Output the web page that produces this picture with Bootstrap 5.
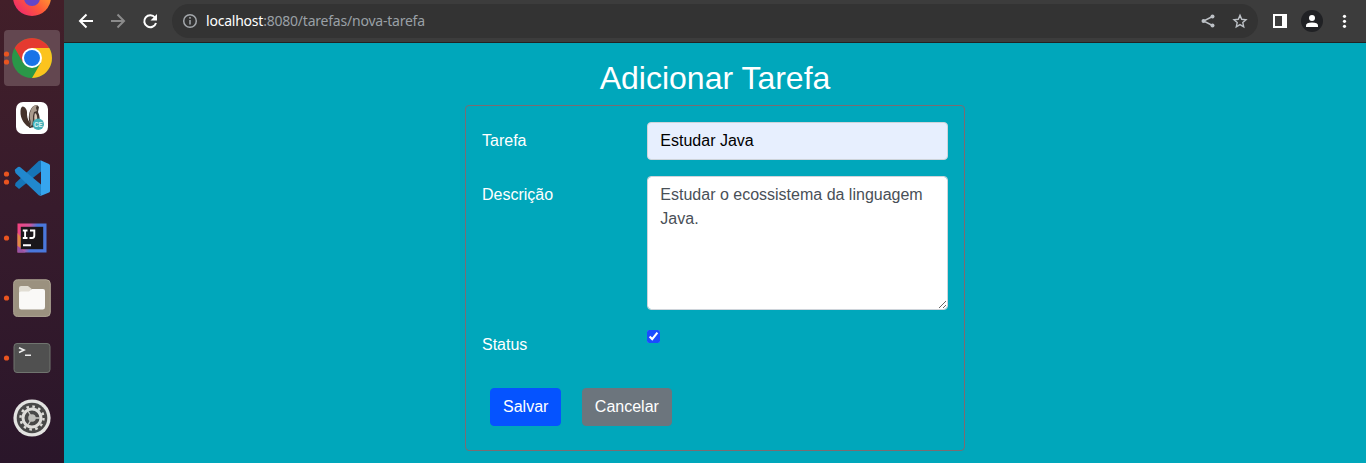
<!DOCTYPE html>
<html lang="pt-br">
<head>
<meta charset="utf-8">
<title>Nova tarefa</title>
<link rel="stylesheet" href="https://cdn.jsdelivr.net/npm/bootstrap@5.3.0/dist/css/bootstrap.min.css">
<style>
body{font-family:"Liberation Sans",Arial,sans-serif;height:463px;background:#00a7bb}
.dock{width:64px;background:linear-gradient(#421f29,#371b2c 45%,#2a162a)}
.dock svg{display:block;flex:none}
.toolbar{height:43px;background:#3c3c3c;border-bottom:1px solid #222}
.addr{height:34px;background:#333;border-radius:17px}
.url{font:14px/20px "Noto Sans",sans-serif;color:#9aa0a6;letter-spacing:-.22px;white-space:nowrap}
.url b{font-weight:400;color:#fff}
h1.title{font-size:32px;line-height:38.4px;font-weight:400;color:#fff;margin:16px 0 8px}
.panel{width:500px;height:346px;border:1px solid #7a6c72;border-radius:4px;color:#fff;padding:16px}
.panel .row{--bs-gutter-x:30px;margin-bottom:16px}
.panel .col-form-label{padding-top:7px;padding-bottom:7px}
.panel .form-control{border-radius:4px;border-color:#ced4da;color:#495057}
.panel input.form-control{background:#e7effe;color:#000;height:38px}
.panel textarea.form-control{height:134px}
.chk{width:13px;height:13px;margin-top:4px;display:block;accent-color:#1a4cff}
.btn-act{border-radius:4px;height:38px}
.btn-save{--bs-btn-color:#fff;--bs-btn-bg:#0553ff;--bs-btn-border-color:#0553ff}
.btn-cancel{margin-left:20.5px}
</style>
<script src="https://cdn.jsdelivr.net/npm/bootstrap@5.3.0/dist/js/bootstrap.bundle.min.js"></script>
</head>
<body class="d-flex overflow-hidden">
<nav class="dock d-flex flex-column flex-shrink-0 overflow-hidden">
  <svg width="64" height="28" viewBox="0 32 64 28"><defs><linearGradient id="ff" x1="0" x2="1" y1="1" y2="0"><stop offset="0" stop-color="#ea1a7c"/><stop offset=".45" stop-color="#ff5a38"/><stop offset="1" stop-color="#ffd02e"/></linearGradient></defs><circle cx="32" cy="29" r="19" fill="url(#ff)"/><circle cx="32" cy="30" r="8" fill="#6546c9"/></svg>
  <svg width="64" height="60" viewBox="0 0 64 60"><rect x="4" y="2" width="56" height="56" rx="4" fill="#634750"/><g fill="#e95420"><circle cx="6.500" cy="26" r="2.600"/><circle cx="6.500" cy="34" r="2.600"/></g>
    <circle cx="32" cy="30" r="20" fill="#2a9748"/><path d="M14.700 20A20 20 0 0 1 49.300 20H32L23.300 35Z" fill="#e53a30"/><path d="M49.300 20A20 20 0 0 1 32 50L40.700 35 32 20Z" fill="#fcc31e"/><circle cx="32" cy="30" r="10" fill="#fff"/><circle cx="32" cy="30" r="8" fill="#1a73e8"/></svg>
  <svg width="64" height="60" viewBox="0 0 64 60"><rect x="16" y="14" width="32" height="32" rx="7" fill="#fff"/><path d="M31 40C25 38 20 31 20.500 23c.2-3 1-4.500 2.500-4.500 3 1 4.500 4 4 8 0 4 2 7 4 10Z" fill="#45332c"/><path d="M29 27c1-6 4-10 8-10l2 2-1 5c2 4 2 8 1 11l-4 4-6 1c2-5-1-7 0-13Z" fill="#433630"/><path d="M32 20c1-2 3-3 5-3l-1 3 1 3-3 1-1 4c0 3 0 6-1 9l-2 2c1-3 1-5 0-8-1-4 0-8 2-11Z" fill="#a99b8d"/><path d="M35 25c2 1 2.500 4 2 7l-2 2c-1-3-1-6 0-9Z" fill="#d6c6b5"/><circle cx="38.300" cy="36.300" r="5.700" fill="#45b0b8"/><text x="38.300" y="39" font-family="Roboto,sans-serif" font-size="7" font-weight="700" text-anchor="middle" fill="#d8f0f2">CE</text></svg>
  <svg width="64" height="60" viewBox="0 0 64 60"><g fill="#e95420"><circle cx="6.500" cy="26" r="2.600"/><circle cx="6.500" cy="34" r="2.600"/></g><path d="M15.500 35 39 12.700l2 .3v10.500L19 41l-4-3.500Z" fill="#1675b8"/><path d="M15 23q-.5-.8 0-1.500l3-2.500q1-.5 2 0l21 17.500v10L39 47.500 15.500 25Z" fill="#2188ce"/><path d="M40.500 12.200 49 16q1 .5 1 1.500V43q0 1-1 1.500L40.500 48q-1 .3-1.500-.5c1.500.5 2-.5 2-1.500V14c0-1-.5-1.700-1.500-1.300Z" fill="#36a5ee"/></svg>
  <svg width="64" height="60" viewBox="0 0 64 60"><defs><linearGradient id="ij" x1="0" x2="1" y2=".3"><stop offset="0" stop-color="#f7407c"/><stop offset=".4" stop-color="#d0569c"/><stop offset=".65" stop-color="#4a78dc"/></linearGradient></defs><circle cx="6.500" cy="30" r="2.600" fill="#e95420"/><rect x="17.500" y="15.500" width="29" height="29" fill="url(#ij)"/><path d="M17.500 25l4 5v10l-4-2Z" fill="#e08a45"/><path d="M17.500 38l8 6.500h-8Z" fill="#9556a6"/><rect x="20.800" y="18.800" width="22.400" height="22.400" fill="#19171b"/><path d="M22.800 22.500h4.700M25.100 22.500v7.500M22.800 30h4.700M30 22.500h4.300V27.500q0 2.500-2.300 2.500h-2.500M23 37.300h8" fill="none" stroke="#fff" stroke-width="1.900"/></svg>
  <svg width="64" height="60" viewBox="0 0 64 60"><circle cx="6.500" cy="30" r="2.600" fill="#e95420"/><rect x="13.700" y="11.800" width="36.600" height="36.600" rx="4" fill="#9b917f" stroke="#b0a795"/><path d="M19 20q0-2 2-2h7l3.500 2.700V28H19Z" fill="#e1ddd3"/><path d="M19 25q0-1.500 2-1.500h8l3-2.500h11q2 0 2 2v16q0 2.500-2.300 2.500H21.300Q19 41.500 19 39Z" fill="#faf9f7"/></svg>
  <svg width="64" height="60" viewBox="0 0 64 60"><circle cx="6.500" cy="30" r="2.600" fill="#e95420"/><rect x="14" y="15.500" width="36" height="29" rx="3" fill="#505050" stroke="#70746f"/><path d="m19 19.800 5 2.300-5 2.300M25 27.300h6" fill="none" stroke="#eee" stroke-width="1.600"/></svg>
  <svg width="64" height="60" viewBox="0 0 64 60"><circle cx="32" cy="30" r="18.600" fill="#e3e3e1"/><circle cx="32" cy="30" r="15.300" fill="#484848"/><circle cx="32" cy="30" r="11.500" fill="none" stroke="#deddda" stroke-width="2.400" stroke-dasharray="2.600 3.420"/><circle cx="32" cy="30" r="9" fill="none" stroke="#deddda" stroke-width="3"/><circle cx="32" cy="30" r="5" fill="none" stroke="#484848" stroke-width="3.500"/><path d="M32 30h8M32 30l-4-7M32 30l-4 7" stroke="#c8c8c4" stroke-width="1.400"/><circle cx="32" cy="30" r="3.800" fill="#bdbdb9"/></svg>
</nav>
<div class="flex-grow-1 d-flex flex-column">
  <header class="toolbar d-flex align-items-center flex-shrink-0">
    <svg width="108" height="42" viewBox="0 0 108 42" class="flex-shrink-0" fill="none" stroke-width="2"><path d="M29 21H16M22.500 14.500 16 21l6.500 6.500" stroke="#fff"/><path d="M47 21h13M53.500 14.500 60 21l-6.500 6.500" stroke="#8b8b8b"/><path d="M91 17.500A6 6 0 1 0 92 23" stroke="#fff"/><path d="M93 14v6.500h-6.500Z" fill="#fff"/></svg>
    <div class="addr d-flex align-items-center flex-grow-1">
      <svg width="34" height="34" viewBox="0 0 34 34" fill="none" stroke="#a4a8ac" stroke-width="1.500"><circle cx="18" cy="17" r="6.300"/><path d="M18 16v4.500M18 13v1.700"/></svg>
      <div class="url"><b>localhost</b>:8080/tarefas/nova-tarefa</div>
      <svg class="ms-auto" width="66" height="34" viewBox="0 0 66 34" fill="none" stroke="#bdc1c6" stroke-width="1.400"><path d="M20.500 12.500 11.500 17l9 4.500"/><g fill="#bdc1c6" stroke="none"><circle cx="20.500" cy="12.400" r="2"/><circle cx="11.500" cy="17" r="2"/><circle cx="20.500" cy="21.600" r="2"/></g><path d="m48 11.300 1.700 4 4.300.4-3.200 2.900.9 4.300-3.700-2.300-3.700 2.300.9-4.300-3.200-2.900 4.300-.4Z"/></svg>
    </div>
    <svg width="108" height="42" viewBox="1258 0 108 42" class="flex-shrink-0"><path d="M1273 14h14v14h-14Zm2 2v10h7V16Z" fill="#fff" fill-rule="evenodd"/><circle cx="1312" cy="21" r="11" fill="#202124"/><circle cx="1312" cy="18" r="3" fill="#fff"/><path d="M1306 27v-1.500q0-3 6-3t6 3V27Z" fill="#fff"/><g fill="#fff"><circle cx="1344.500" cy="16.300" r="1.600"/><circle cx="1344.500" cy="21.300" r="1.600"/><circle cx="1344.500" cy="26.300" r="1.600"/></g></svg>
  </header>
  <main class="d-flex flex-column align-items-center">
    <h1 class="title">Adicionar Tarefa</h1>
    <form class="panel">
      <div class="row">
        <label for="tarefa" class="col-4 col-form-label">Tarefa</label>
        <div class="col-8"><input id="tarefa" type="text" class="form-control" value="Estudar Java"></div>
      </div>
      <div class="row">
        <label for="descricao" class="col-4 col-form-label">Descrição</label>
        <div class="col-8"><textarea id="descricao" class="form-control" rows="5">Estudar o ecossistema da linguagem Java.</textarea></div>
      </div>
      <div class="row">
        <label for="status" class="col-4 col-form-label">Status</label>
        <div class="col-8"><input id="status" type="checkbox" class="chk" checked></div>
      </div>
      <div class="d-flex ps-2 pt-2">
        <button type="button" class="btn btn-act btn-save">Salvar</button>
        <button type="button" class="btn btn-act btn-secondary btn-cancel">Cancelar</button>
      </div>
    </form>
  </main>
</div>
</body>
</html>
